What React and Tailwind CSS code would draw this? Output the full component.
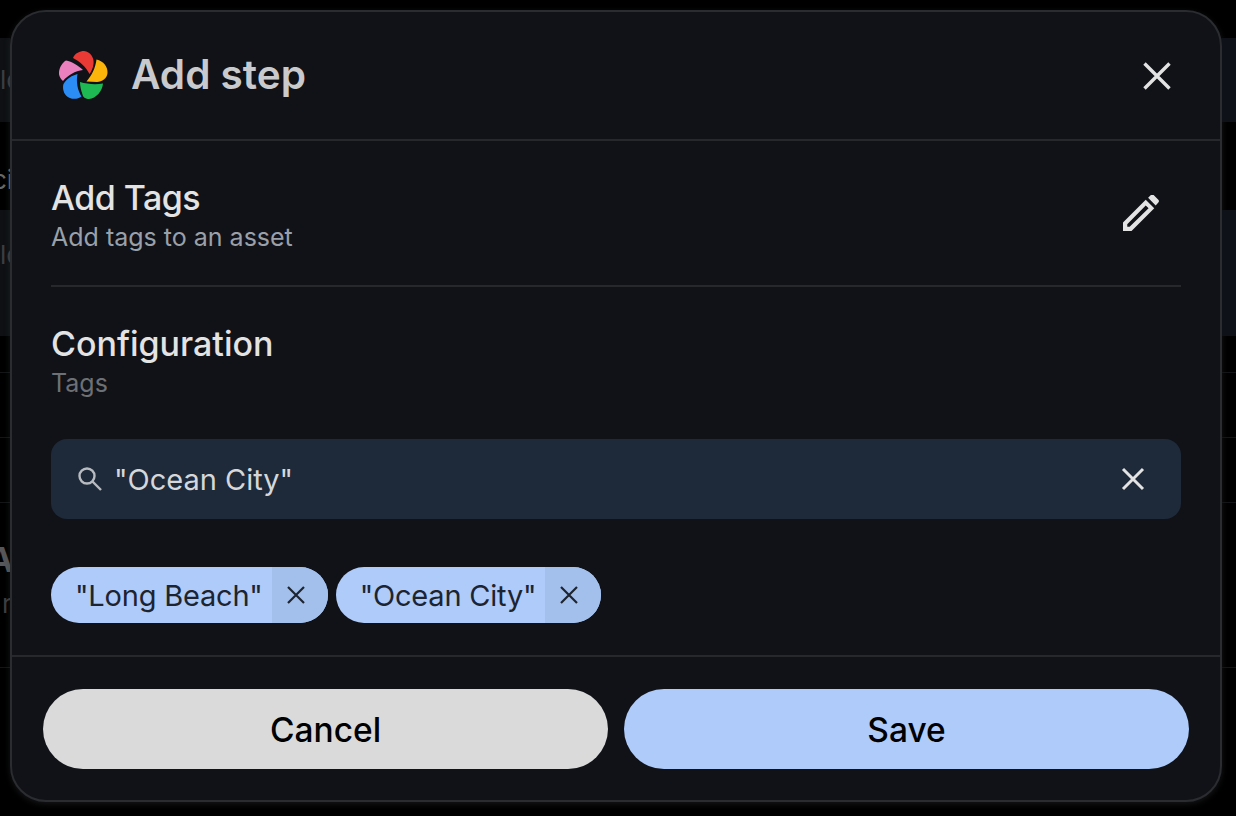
function Logo() {
  return (
    <svg width="49" height="49" viewBox="59 50 49 49" className="shrink-0">
      <path d="M73 57 C75 52 80 50 84 50 C90.500 50.500 94.500 57 93.500 63 C93 67 91.500 70.500 89.500 73 C86 66 80 60.500 73 57Z" fill="#ea3a35" />
      <path d="M96.500 58.500 C103.500 60 108 66 107.500 72 C107 77.500 102 81 97 81 L86.500 80.500 C92 74 95.500 67 96.500 58.500Z" fill="#fbb50a" />
      <path d="M80 81 C87 83 95 84 103 82.500 C102.500 90 96 97.500 89 98 C86 98 83 96.500 82.500 93.500 C81 89 80 85 80 81Z" fill="#1fb954" />
      <path d="M77.500 73 C76 81 77.500 89 81.500 95.500 C77 99 70 98.500 66 94.500 C63 91 62.500 86 63.500 83 C67 77.500 72 74.500 77.500 73Z" fill="#2b8cf5" />
      <path d="M66 59.500 C72 60.500 78 64.500 83 69 C75 70 68 74 63 80 C60 77.500 58.500 74 59 71 C59.500 66 62.500 61.500 66 59.500Z" fill="#ea80bd" />
    </svg>
  );
}
function Chip({ label }) {
  return (
    <div className="flex h-14 items-stretch overflow-hidden rounded-full bg-[#aecbfa] text-[#1d2430]">
      <span className="flex items-center pl-6 pr-[9px] text-[29px] leading-none tracking-[-0.2px]">{label}</span>
      <span className="flex w-14 items-center justify-center bg-[#a3bfeb] pr-2">
        <svg width="20" height="20" viewBox="0 0 20 20" stroke="#1d2430" strokeWidth="2.2" fill="none"><path d="M2 2 18 18M18 2 2 18" /></svg>
      </span>
    </div>
  );
}
export default function App() {
  return (
    <div className="flex h-[816px] w-[1236px] overflow-hidden bg-black font-['Inter',sans-serif]">
      <div className="flex w-[10px] shrink-0 flex-col overflow-hidden text-[26px] leading-none">
        <div className="h-[38px]" />
        <div className="flex h-[84px] items-center bg-[#0e1013] text-[#3c3e42]">lc</div>
        <div className="flex h-[88px] items-center pt-[28px] text-[#66686c]"><span className="-ml-[8px]">ci</span></div>
        <div className="flex h-[126px] items-center bg-[#0e1013] pb-[36px] text-[#3c3e42]">lc</div>
        <div className="h-[36px]" />
        <div className="h-[65px] border-t border-[#141516]" />
        <div className="h-[65px] border-t border-[#141516]" />
        <div className="flex h-[165px] flex-col border-t border-[#141516] pt-[40px]">
          <span className="-ml-[12px] text-[34px] font-bold text-[#55575a]">A</span>
          <span className="ml-[2px] mt-[14px] text-[#3c3e42]">r</span>
        </div>
        <div className="flex-1 border-t border-[#141516]" />
      </div>
      <div className="my-[10px] flex h-[792px] w-[1212px] shrink-0 flex-col rounded-[36px] border-2 border-[#2a2c30] bg-[#101218] shadow-[0_2px_6px_rgba(60,62,68,0.35)]">
        <header className="flex h-[129px] shrink-0 items-center border-b-2 border-[#26282c] pl-[47px] pr-[49px]">
          <Logo />
          <h1 className="ml-[23px] text-[40.5px] font-semibold leading-none text-[#c8cacd]">Add step</h1>
          <svg className="ml-auto" width="28" height="28" viewBox="0 0 28 28" stroke="#e3e3e3" strokeWidth="3.4" fill="none"><path d="M1.500 1.500 26.500 26.500M26.500 1.500 1.500 26.500" /></svg>
        </header>
        <section className="mx-[39px] flex h-[146px] shrink-0 items-center justify-between border-b-2 border-[#26282c]">
          <div className="pt-[5px]">
            <div className="text-[34px] font-medium leading-[42px] tracking-[-0.55px] text-[#e3e3e3]">Add Tags</div>
            <div className="text-[25px] leading-[36px] text-[#9aa0a9]">Add tags to an asset</div>
          </div>
          <svg className="mr-[22px]" width="36" height="36" viewBox="0 0 38 38" fill="#e3e3e3"><path fillRule="evenodd" d="M0 38V29L24 5l9 9L9 38H0Zm4.500-4.500h2.500L27 14l-3-3L4.500 31ZM26.500 3 29.500 0a2 2 0 0 1 2.800 0l5 5a2 2 0 0 1 0 2.800L34.500 11Z" /></svg>
        </section>
        <section className="mx-[39px] shrink-0 pt-[36px]">
          <div className="text-[34px] font-medium leading-[42px] text-[#e3e3e3]">Configuration</div>
          <div className="text-[25px] leading-[36px] text-[#6d7075]">Tags</div>
          <div className="mt-[38px] flex h-20 items-center rounded-[16px] bg-[#1e2a3a] pl-[27px] pr-[36px]">
            <svg width="24" height="24" viewBox="0 0 24 24" fill="none" stroke="#b8bbc0" strokeWidth="2.400"><circle cx="9" cy="9" r="7.500" /><path d="m14.500 14.500 8.500 8.500" /></svg>
            <span className="ml-[12px] text-[29px] leading-none text-[#d5d7da]">"Ocean City"</span>
            <svg className="ml-auto" width="24" height="24" viewBox="0 0 24 24" stroke="#e3e3e3" strokeWidth="3" fill="none"><path d="M2 2 22 22M22 2 2 22" /></svg>
          </div>
          <div className="mt-[48px] flex gap-2">
            <Chip label={'"Long Beach"'} />
            <Chip label={'"Ocean City"'} />
          </div>
        </section>
        <footer className="mt-[32px] flex flex-1 gap-4 border-t-2 border-[#26282c] px-[31px] pt-[32px]">
          <button className="h-20 flex-1 rounded-full bg-[#dadada] pt-[2px] text-[33.5px] font-medium text-black">Cancel</button>
          <button className="h-20 flex-1 rounded-full bg-[#aecbfa] pt-[2px] text-[33.5px] font-medium text-black">Save</button>
        </footer>
      </div>
      <div className="flex w-[14px] shrink-0 flex-col">
        <div className="h-[38px]" />
        <div className="h-[84px] bg-[#0e1118]" />
        <div className="h-[88px]" />
        <div className="h-[126px] bg-[#0e1118]" />
        <div className="h-[36px]" />
        <div className="h-[65px] border-t border-[#141516]" />
        <div className="h-[65px] border-t border-[#141516]" />
        <div className="h-[165px] border-t border-[#141516]" />
        <div className="flex-1 border-t border-[#141516]" />
      </div>
    </div>
  );
}
